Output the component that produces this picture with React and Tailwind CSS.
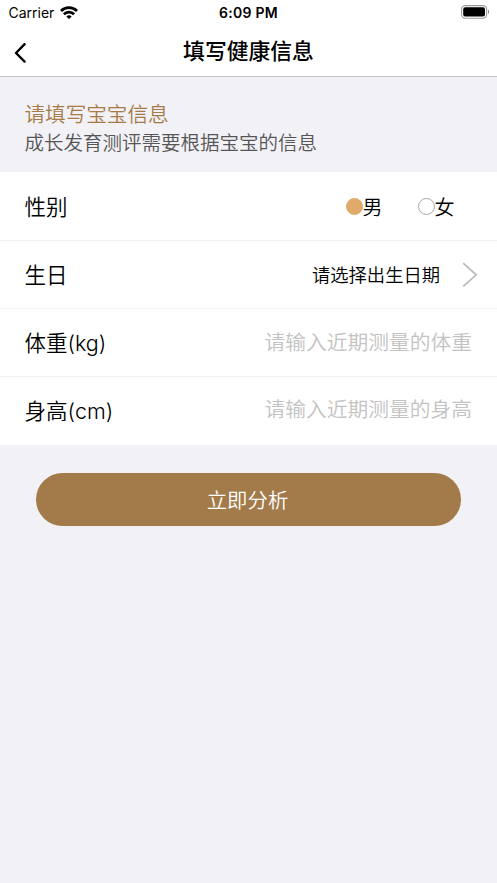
import React, { useState } from "react";
import clsx from "clsx";

function StatusBar() {
  return (
    <div className="grid grid-cols-3 items-center h-[25px] pl-[8px] pr-[7px] text-[14px] leading-[25px]">
      <div className="flex items-center gap-[6px]">
        <span className="pl-[0.5px] font-normal">Carrier</span>
        <svg className="mb-px" width="18" height="13" viewBox="0 0 18 13" fill="none" stroke="#000" strokeWidth="2.8">
          <path d="M1 4.9a11.4 11.4 0 0 1 16 0" />
          <path d="M3.9 8.2a7.2 7.2 0 0 1 10.2 0" />
          <path d="M9 13 6.3 10.5a3.8 3.8 0 0 1 5.4 0Z" fill="#000" stroke="none" />
        </svg>
      </div>
      <span className="text-center pr-[1px] font-semibold tracking-[0.3px]">6:09 PM</span>
      <svg className="justify-self-end mb-px" width="29" height="14" viewBox="0 0 29 14">
        <rect x="0.6" y="0.6" width="25" height="12.6" rx="3.6" fill="#fff" stroke="#999" strokeWidth="1.1" />
        <rect x="2.2" y="2.2" width="21.8" height="9.4" rx="2" fill="#000" />
        <path d="M27 4.8c1.6.7 1.6 3.5 0 4.2Z" fill="#888" />
      </svg>
    </div>
  );
}

function NavBar({ title }) {
  return (
    <div className="grid grid-cols-[60px_1fr_60px] items-center h-[52px] border-b border-[#c3c3c6]">
      <button type="button" className="pl-[14px] pt-[4px]">
        <svg width="13" height="20" viewBox="0 0 13 20" fill="none" stroke="#000" strokeWidth="2.4" strokeLinecap="round" strokeLinejoin="round">
          <path d="M10.6 1.2 2 10l8.6 8.6" />
        </svg>
      </button>
      <h1 className="text-center text-[21.8px] leading-[30px] font-medium">{title}</h1>
    </div>
  );
}

function Row({ label, className, children }) {
  return (
    <div className={clsx("flex items-center justify-between bg-white pl-[24.5px] pr-[25px] border-[#f2f2f6]", className)}>
      <span className="text-[21.5px] leading-[30px]">{label}</span>
      {children}
    </div>
  );
}

function Radio({ label, checked, onSelect }) {
  return (
    <button type="button" onClick={onSelect} className="flex items-center">
      <span
        className={clsx(
          "w-[17px] h-[17px] rounded-full border",
          checked ? "bg-[#dfaa6a] border-[#dfaa6a]" : "bg-white border-[#a8a8a8]"
        )}
      />
      <span className="text-[20px] leading-[28px] pt-[2px]">{label}</span>
    </button>
  );
}

function NumberInput({ placeholder, value, onChange, className }) {
  return (
    <input
      inputMode="decimal"
      value={value}
      onChange={(e) => onChange(e.target.value)}
      placeholder={placeholder}
      className={clsx("w-[220px] h-[32px] text-right text-[20.75px] placeholder:text-[#c3c3c3] outline-none", className)}
    />
  );
}

export default function App() {
  const [gender, setGender] = useState("male");
  const [weight, setWeight] = useState("");
  const [height, setHeight] = useState("");

  return (
    <div className="min-h-[883px] bg-[#f2f1f6] text-black font-[350] font-[Inter,'Noto_Sans_CJK_SC',sans-serif]">
      <header className="bg-white">
        <StatusBar />
        <NavBar title="填写健康信息" />
      </header>

      <section className="h-[95px] pl-[24.5px] pt-[24px]">
        <p className="text-[20.6px] leading-[28px] text-[#a67b48]">请填写宝宝信息</p>
        <p className="text-[19.5px] leading-[28px] text-[#565656]">成长发育测评需要根据宝宝的信息</p>
      </section>

      <Row label="性别" className="h-[69px] pt-px border-b">
        <div className="flex gap-[35px] pr-[17.5px]">
          <Radio label="男" checked={gender === "male"} onSelect={() => setGender("male")} />
          <Radio label="女" checked={gender === "female"} onSelect={() => setGender("female")} />
        </div>
      </Row>
      <Row label="生日" className="h-[68px] border-b">
        <button type="button" className="flex items-center gap-[22px] -mr-[6px]">
          <span className="text-[18.3px] leading-[26px]">请选择出生日期</span>
          <svg width="16" height="26" viewBox="0 0 16 26" fill="none" stroke="#bcbcbc" strokeWidth="1.8">
            <path d="M1.2 1.2 14.2 12.8 1.2 24.4" />
          </svg>
        </button>
      </Row>
      <Row label="体重(kg)" className="h-[68px] border-b">
        <NumberInput placeholder="请输入近期测量的体重" value={weight} onChange={setWeight} />
      </Row>
      <Row label="身高(cm)" className="h-[68px]">
        <NumberInput placeholder="请输入近期测量的身高" value={height} onChange={setHeight} className="mb-[3px]" />
      </Row>

      <div className="px-[36px] pt-[28.4px]">
        <button type="button" className="w-full h-[52.8px] pt-[4px] pr-[2px] rounded-full bg-[#a37b4a] text-white text-[20.4px]">
          立即分析
        </button>
      </div>
    </div>
  );
}
